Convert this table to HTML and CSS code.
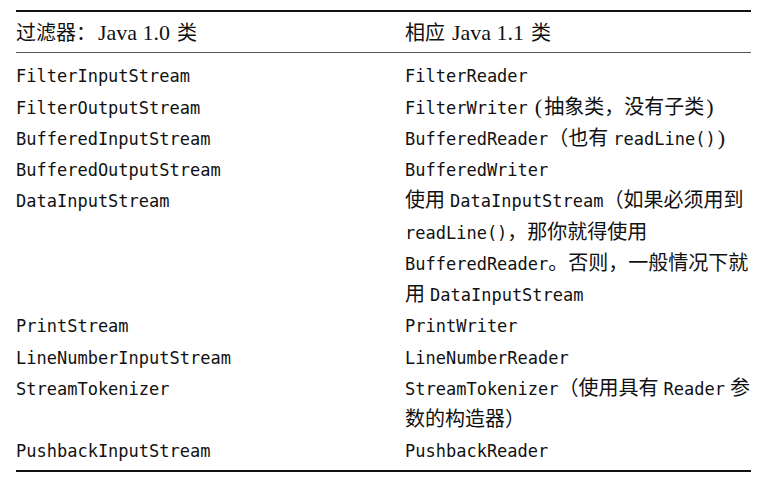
FILE: index.html
```html
<!DOCTYPE html>
<html lang="zh">
<head>
<meta charset="utf-8">
<title>过滤器对照表</title>
<link rel="stylesheet" href="styles.css">
</head>
<body>
<table class="tbl">
  <thead>
    <tr>
      <th class="c1">过滤器：<span class="en">Java 1.0</span> 类</th>
      <th class="c2">相应 <span class="en">Java 1.1</span> 类</th>
    </tr>
  </thead>
  <tbody>
    <tr class="first"><td><code>FilterInputStream</code></td><td><code>FilterReader</code></td></tr>
    <tr><td><code>FilterOutputStream</code></td><td><code>FilterWriter</code> <span class="en">(</span>抽象类，没有子类<span class="en">)</span></td></tr>
    <tr><td><code>BufferedInputStream</code></td><td><code>BufferedReader</code>（也有 <code>readLine()</code><span class="en">)</span></td></tr>
    <tr><td><code>BufferedOutputStream</code></td><td><code>BufferedWriter</code></td></tr>
    <tr><td><code>DataInputStream</code></td><td>使用 <code>DataInputStream</code>（如果必须用到<br><code>readLine()</code>，那你就得使用<br><code>BufferedReader</code>。否则，一般情况下就<br>用 <code>DataInputStream</code></td></tr>
    <tr><td><code>PrintStream</code></td><td><code>PrintWriter</code></td></tr>
    <tr><td><code>LineNumberInputStream</code></td><td><code>LineNumberReader</code></td></tr>
    <tr><td><code>StreamTokenizer</code></td><td><code>StreamTokenizer</code>（使用具有 <code>Reader</code> 参<br>数的构造器）</td></tr>
    <tr class="last"><td><code>PushbackInputStream</code></td><td><code>PushbackReader</code></td></tr>
  </tbody>
</table>
</body>
</html>
```
FILE: styles.css
```css
html, body {
  margin: 0;
  padding: 0;
  background: #ffffff;
}

body {
  padding-top: 10px;
  color: #111111;
  font-family: "Liberation Serif", "Noto Sans CJK SC", serif;
  font-size: 20px;
}

.tbl {
  margin-left: 16px;
  width: 735px;
  border-collapse: collapse;
  border-top: 2px solid #111111;
  border-bottom: 2px solid #111111;
}

.tbl th,
.tbl td {
  padding: 0;
  text-align: left;
  vertical-align: top;
  font-weight: normal;
  line-height: 31.25px;
  white-space: nowrap;
}

.tbl th {
  padding-top: 6px;
  padding-bottom: 3px;
  border-bottom: 1px solid #555555;
}

.tbl .c1 {
  width: 389px;
}

.tbl tr.first td {
  padding-top: 7px;
}

.tbl tr.last td {
  padding-bottom: 3px;
}

.en {
  font-size: 22px;
  line-height: 20px;
  margin: 0 2px;
}

code {
  font-family: "DejaVu Sans Mono", "Liberation Mono", monospace;
  font-size: 17px;
  line-height: 17px;
}
```
